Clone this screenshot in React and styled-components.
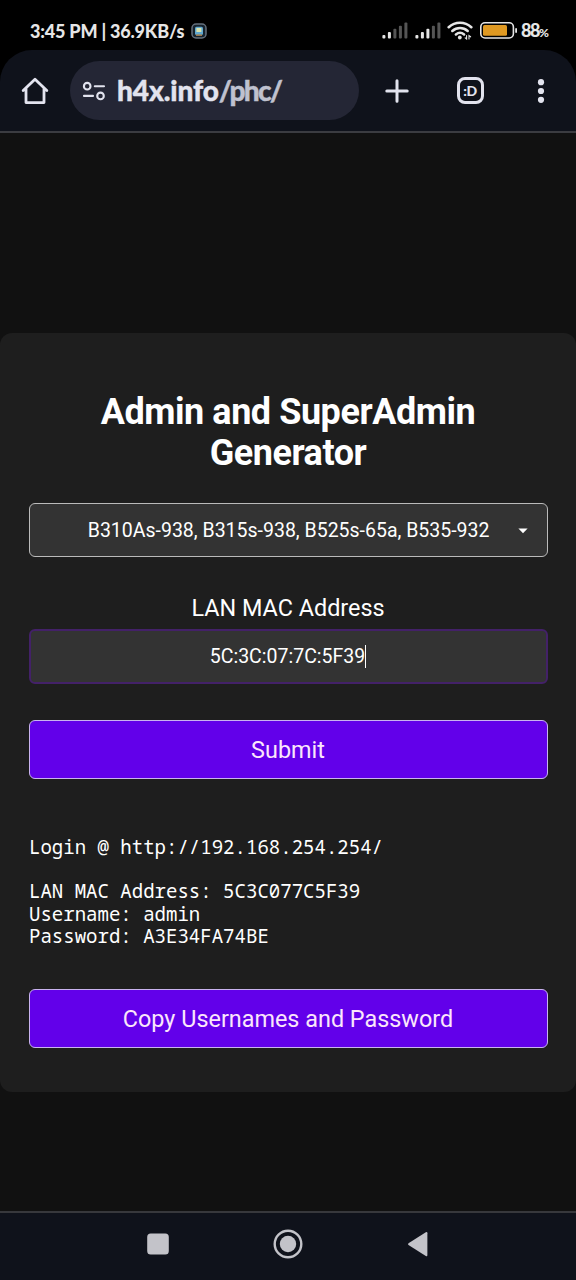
import { Component } from "react";
import styled, { createGlobalStyle } from "styled-components";

const GlobalStyle = createGlobalStyle`
  * {
    box-sizing: border-box;
  }
  body {
    margin: 0;
    background: #000;
    font-family: Roboto, "Liberation Sans", sans-serif;
  }
`;

const Screen = styled.div`
  width: 576px;
  height: 1280px;
  display: flex;
  flex-direction: column;
  overflow: hidden;
  background: #000;
`;

const StatusBar = styled.div`
  height: 50px;
  padding: 11px 28px 0 30px;
  display: flex;
  align-items: center;
  justify-content: space-between;
  color: #e6e6e6;
`;

const StatusGroup = styled.div`
  display: flex;
  align-items: center;
  gap: ${(props) => props.$gap}px;
`;

const StatusText = styled.span`
  width: 155px;
  font-family: Lato, sans-serif;
  font-size: 18px;
  font-weight: 900;
  line-height: 20px;
  letter-spacing: -0.2px;
  white-space: nowrap;
`;

const BatteryText = styled.span`
  width: 27px;
  margin-left: -3px;
  padding-top: 1px;
  font-family: Lato, sans-serif;
  font-size: 18px;
  font-weight: 900;
  line-height: 20px;
  letter-spacing: -1.5px;
  white-space: nowrap;
  small {
    font-size: 12px;
  }
`;

const Toolbar = styled.div`
  height: 83px;
  flex-shrink: 0;
  padding: 0 24px 0 20px;
  display: flex;
  align-items: center;
  border-bottom: 2px solid #3b3c41;
  border-radius: 32px 32px 0 0;
  background: #0f121b;
  color: #e2e3ee;
`;

const IconButton = styled.button`
  width: ${(props) => props.$width || 30}px;
  height: 30px;
  margin-left: ${(props) => props.$left || 0}px;
  padding: 0;
  flex-shrink: 0;
  display: flex;
  align-items: center;
  justify-content: center;
  border: 0;
  background: none;
  color: inherit;
`;

const AddressBar = styled.div`
  width: 289px;
  height: 59px;
  margin-left: 20px;
  padding-left: 12px;
  flex-shrink: 0;
  display: flex;
  align-items: center;
  gap: 11px;
  border-radius: 30px;
  background: #242635;
`;

const Url = styled.span`
  padding-bottom: 2px;
  font-family: Lato, sans-serif;
  font-size: 28px;
  font-weight: 900;
  line-height: 34px;
  letter-spacing: -0.1px;
  color: #e2e3ee;
  white-space: nowrap;
  -webkit-text-stroke: 0.4px currentColor;
  span {
    letter-spacing: -1.7px;
    color: #bfc1cf;
  }
`;

const Page = styled.main`
  flex: 1;
  display: flex;
  align-items: flex-start;
  padding-top: 200px;
  background: #111;
`;

const Card = styled.section`
  width: 100%;
  height: 759px;
  padding: 59px 28.5px 0;
  border-radius: 12px;
  background: #1e1e1e;
  color: #fff;
`;

const Title = styled.h1`
  margin: 0 0 29px;
  font-size: 36px;
  font-weight: 700;
  line-height: 41px;
  letter-spacing: -0.45px;
  text-align: center;
`;

const Field = styled.div`
  width: 100%;
  height: 55px;
  display: flex;
  align-items: center;
  justify-content: center;
  border: ${(props) => (props.$focused ? "2px solid #432168" : "1px solid #bbb")};
  border-radius: 6px;
  background: #333;
  font-size: 19.5px;
  line-height: 24px;
  color: #fff;
`;

const SelectField = styled(Field)`
  height: 54px;
  justify-content: flex-end;
  padding-top: 2px;
  padding-right: 19px;
  gap: 28px;
`;

const Label = styled.label`
  display: block;
  margin-top: 36px;
  padding-bottom: 6px;
  font-size: 23.4px;
  line-height: 30px;
  text-align: center;
`;

const Caret = styled.i`
  width: 1px;
  height: 23px;
  background: #fff;
`;

const Button = styled.button`
  width: 100%;
  height: 59px;
  margin-top: ${(props) => props.$top}px;
  padding: 0;
  display: block;
  border: 1px solid #c9b3ef;
  border-radius: 6px;
  background: #6200ea;
  font-family: inherit;
  font-size: 23.4px;
  color: #fbe6fb;
`;

const Result = styled.pre`
  margin: 56px 0 0;
  padding: 0.5px 0 0 0.5px;
  font-family: "Droid Sans Mono", "Noto Sans Mono", "DejaVu Sans Mono", monospace;
  font-size: 19.05px;
  line-height: 22.4px;
  color: #fff;
`;

const NavBar = styled.nav`
  height: 69px;
  flex-shrink: 0;
  padding-bottom: 5px;
  display: flex;
  align-items: center;
  justify-content: center;
  gap: 100px;
  border-top: 2px solid #37383c;
  background: #0f121b;
  color: #c3c3c9;
`;

const SignalIcon = ({ level }) => (
  <svg width="26" height="17" viewBox="0 0 26 17">
    {[0, 1, 2, 3, 4].map((index) => (
      <rect
        key={index}
        x={0.4 + index * 5.5}
        y={13 - index * 3.1}
        width="3"
        height={3.6 + index * 3.1}
        rx="1"
        fill={index < level ? "#e6e6e6" : "#555"}
      />
    ))}
  </svg>
);

const WifiIcon = () => (
  <svg width="26" height="19" viewBox="0 0 26 19" fill="none" stroke="#e6e6e6" strokeWidth="2.6" strokeLinecap="round">
    <path d="M1.7 6.2C8.2.3 17.8.3 24.3 6.2" />
    <path d="M5.3 9.9C9.8 6 16.2 6 20.7 9.9" />
    <path d="M8.9 13.4C11.4 11.4 14.6 11.4 17.1 13.4" />
    <circle cx="12.8" cy="16.5" r="1.9" fill="#e6e6e6" stroke="none" />
    <path d="M19.6 14.6v3.4l-1.4-1.2M22 18v-3.4l1.6 1.2" strokeWidth="1.1" />
  </svg>
);

const BatteryIcon = () => (
  <svg width="38" height="17" viewBox="0 0 38 17">
    <rect x="0.8" y="0.8" width="32.6" height="15.2" rx="4.2" fill="none" stroke="#e6e6e6" strokeWidth="1.6" />
    <rect x="3" y="3" width="24" height="10.8" rx="1.5" fill="#df9922" />
    <rect x="35.2" y="6" width="1.8" height="5" rx="0.9" fill="#e6e6e6" />
  </svg>
);

const ChipIcon = () => (
  <svg width="16" height="16" viewBox="0 0 16 16">
    <rect x="1" y="1" width="14" height="14" rx="4" fill="#16232e" stroke="#66707c" strokeWidth="1.5" />
    <rect x="4" y="3.8" width="8" height="8.2" rx="1.5" fill="#61a8cf" />
    <rect x="5.4" y="5" width="5" height="4" fill="#d9e3ad" />
    <path d="M5 12.2h6" stroke="#a27b4b" strokeWidth="1.5" />
  </svg>
);

const HomeIcon = () => (
  <svg width="28" height="28" viewBox="0 0 28 28" fill="none" stroke="currentColor" strokeWidth="2.8" strokeLinecap="round" strokeLinejoin="round">
    <path d="M2.2 13.5L14 2.2l11.8 11.3M5 11.5v14.1h18V11.5" />
  </svg>
);

const TuneIcon = () => (
  <svg width="24" height="20" viewBox="0 0 24 20" fill="none" stroke="currentColor" strokeWidth="2.1" strokeLinecap="round">
    <circle cx="5.2" cy="5.2" r="3.3" />
    <path d="M12.8 5.2H22M2 14.9h9" />
    <circle cx="18.5" cy="14.9" r="3.3" />
  </svg>
);

const PlusIcon = () => (
  <svg width="26" height="26" viewBox="0 0 26 26" stroke="currentColor" strokeWidth="3" strokeLinecap="round">
    <path d="M13 2.8v20.4M2.8 13h20.4" />
  </svg>
);

const TabCount = styled.span`
  width: 27px;
  height: 27px;
  display: flex;
  align-items: center;
  justify-content: center;
  border: 3px solid #e2e3ee;
  border-radius: 8px;
  font-family: Lato, sans-serif;
  font-size: 14px;
  font-weight: 900;
  line-height: 16px;
  letter-spacing: -0.5px;
`;

const MenuIcon = () => (
  <svg width="8" height="26" viewBox="0 0 8 26" fill="currentColor">
    <circle cx="4" cy="4.2" r="3.1" />
    <circle cx="4" cy="13" r="3.1" />
    <circle cx="4" cy="21.8" r="3.1" />
  </svg>
);

const ArrowIcon = () => (
  <svg width="10" height="6" viewBox="0 0 10 6">
    <path d="M0.4 0.4h9.2L5 5.2z" fill="#fff" />
  </svg>
);

class App extends Component {
  constructor(props) {
    super(props);
    this.state = {
      model: "B310As-938, B315s-938, B525s-65a, B535-932",
      mac: "5C:3C:07:7C:5F39",
      login: "http://192.168.254.254/",
      username: "admin",
      password: "A3E34FA74BE",
    };
  }

  showResult = () => {
    const { mac, login, username, password } = this.state;
    return [
      `Login @ ${login}`,
      "",
      `LAN MAC Address: ${mac.replace(/:/g, "")}`,
      `Username: ${username}`,
      `Password: ${password}`,
    ].join("\n");
  };

  render() {
    const { model, mac } = this.state;

    return (
      <Screen>
        <GlobalStyle />
        <StatusBar>
          <StatusGroup $gap={6}>
            <StatusText>3:45 PM | 36.9KB/s</StatusText>
            <ChipIcon />
          </StatusGroup>
          <StatusGroup $gap={6.5}>
            <SignalIcon level={2} />
            <SignalIcon level={3} />
            <WifiIcon />
            <BatteryIcon />
            <BatteryText>
              88<small>%</small>
            </BatteryText>
          </StatusGroup>
        </StatusBar>

        <Toolbar>
          <IconButton>
            <HomeIcon />
          </IconButton>
          <AddressBar>
            <TuneIcon />
            <Url>
              h4x.info<span>/phc/</span>
            </Url>
          </AddressBar>
          <IconButton $left={23}>
            <PlusIcon />
          </IconButton>
          <IconButton $left={43}>
            <TabCount>:D</TabCount>
          </IconButton>
          <IconButton $left={50} $width={12}>
            <MenuIcon />
          </IconButton>
        </Toolbar>

        <Page>
          <Card>
            <Title>
              Admin and SuperAdmin
              <br />
              Generator
            </Title>
            <SelectField>
              {model}
              <ArrowIcon />
            </SelectField>
            <Label>LAN MAC Address</Label>
            <Field $focused>
              {mac}
              <Caret />
            </Field>
            <Button $top={36}>Submit</Button>
            <Result>{this.showResult()}</Result>
            <Button $top={41.5}>Copy Usernames and Password</Button>
          </Card>
        </Page>

        <NavBar>
          <svg width="30" height="30" viewBox="0 0 30 30" fill="currentColor">
            <rect x="4.2" y="4.4" width="21.6" height="21.2" rx="3.5" />
          </svg>
          <svg width="30" height="30" viewBox="0 0 30 30" fill="currentColor">
            <circle cx="15" cy="15" r="13.3" fill="none" stroke="currentColor" strokeWidth="2.4" />
            <circle cx="15" cy="15" r="8.2" />
          </svg>
          <svg width="30" height="30" viewBox="0 0 30 30" fill="currentColor">
            <path d="M5.5 14.2L22.8 3.3q1.6-.8 1.6 1v21.6q0 1.8-1.6 1L5.5 16q-1-.9 0-1.8z" />
          </svg>
        </NavBar>
      </Screen>
    );
  }
}

export default App;
